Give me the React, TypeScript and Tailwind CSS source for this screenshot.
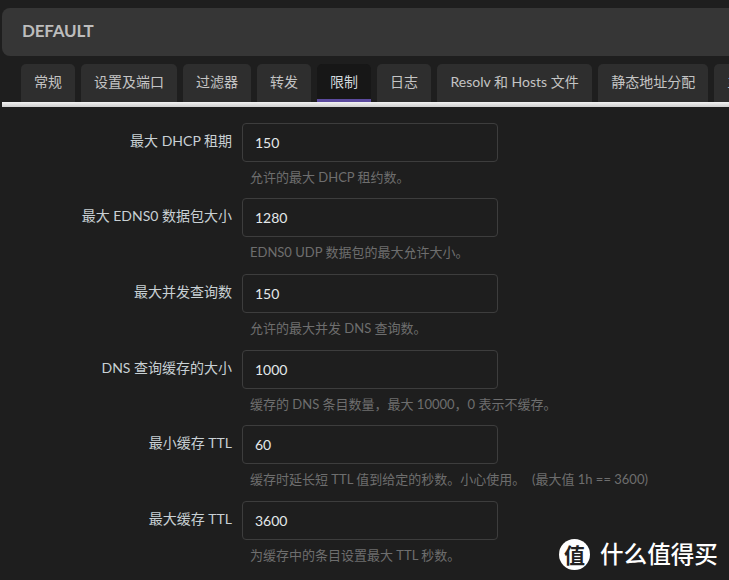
import React from "react";

const tabs = [
  "常规",
  "设置及端口",
  "过滤器",
  "转发",
  "限制",
  "日志",
  "Resolv 和 Hosts 文件",
  "静态地址分配",
  "主机",
];

const rows = [
  { label: "最大 DHCP 租期", value: "150", hint: "允许的最大 DHCP 租约数。" },
  { label: "最大 EDNS0 数据包大小", value: "1280", hint: "EDNS0 UDP 数据包的最大允许大小。" },
  { label: "最大并发查询数", value: "150", hint: "允许的最大并发 DNS 查询数。" },
  { label: "DNS 查询缓存的大小", value: "1000", hint: "缓存的 DNS 条目数量，最大 10000，0 表示不缓存。" },
  { label: "最小缓存 TTL", value: "60", hint: "缓存时延长短 TTL 值到给定的秒数。小心使用。\u00A0\u00A0(最大值 1h == 3600)" },
  { label: "最大缓存 TTL", value: "3600", hint: "为缓存中的条目设置最大 TTL 秒数。" },
];

const App: React.FC = () => {
  return (
    <div className="relative w-[729px] h-[580px] overflow-hidden bg-[#1e1e1e] font-['Lato','Noto_Sans_CJK_SC',sans-serif]">
      {/* title */}
      <div className="pt-2 pl-[2px]">
        <div className="h-[48px] w-[800px] rounded-l-[8px] bg-[#363636] pl-[20px] pb-[2px] flex items-center">
          <h2 className="text-[17px] font-bold text-[#bdbdbd] tracking-[-0.2px]">DEFAULT</h2>
        </div>
      </div>

      {/* tabs */}
      <div className="mt-2 flex gap-[6px] pl-[21px] w-[900px] h-[38px]">
        {tabs.map((t) => (
          <div
            key={t}
            className={
              t === "限制"
                ? "h-[38px] px-[13px] pb-[1px] rounded-t-[5px] bg-[#171717] text-[#cfd8dc] text-[14px] flex items-center border-b-[3px] border-[#5b4a9e] shrink-0"
                : t.startsWith("Resolv")
                  ? "h-[38px] px-[13.5px] pb-[4px] rounded-t-[5px] bg-[#2e2e2e] text-[#c4c4c4] text-[14px] flex items-center shrink-0"
                  : "h-[38px] px-[13px] pb-[4px] rounded-t-[5px] bg-[#2e2e2e] text-[#c4c4c4] text-[14px] flex items-center shrink-0"
            }
          >
            {t}
          </div>
        ))}
      </div>
      <div className="ml-[2px] h-[5px] bg-gradient-to-b from-[#f2f2f2] to-[#cfcfcf]" />

      {/* form */}
      <div className="pt-[15.8px]">
        {rows.map((r) => (
          <div key={r.label} className="h-[75.6px] flex items-start">
            <label className="w-[232px] text-right text-[14px] leading-[36px] text-[#c8d0d4] shrink-0">
              {r.label}
            </label>
            <div className="ml-[10px]">
              <input
                readOnly
                value={r.value}
                className="block w-[256px] h-[39px] rounded-[4px] border border-[#3d3d3d] bg-transparent pl-[12px] text-[14px] text-[#e4e8ea] outline-none"
              />
              <p className="mt-[6px] pl-[8px] text-[13px] leading-[18px] text-[#6e6e6e] whitespace-nowrap">
                {r.hint}
              </p>
            </div>
          </div>
        ))}
      </div>

      {/* watermark */}
      <div className="absolute left-[559px] top-[537px] flex items-center gap-[10px]">
        <div className="w-[31px] h-[31px] rounded-full bg-white text-[#222222] text-[21px] font-bold flex items-center justify-center">
          值
        </div>
        <span className="text-[23.6px] text-white font-medium whitespace-nowrap">什么值得买</span>
      </div>
    </div>
  );
};

export default App;
